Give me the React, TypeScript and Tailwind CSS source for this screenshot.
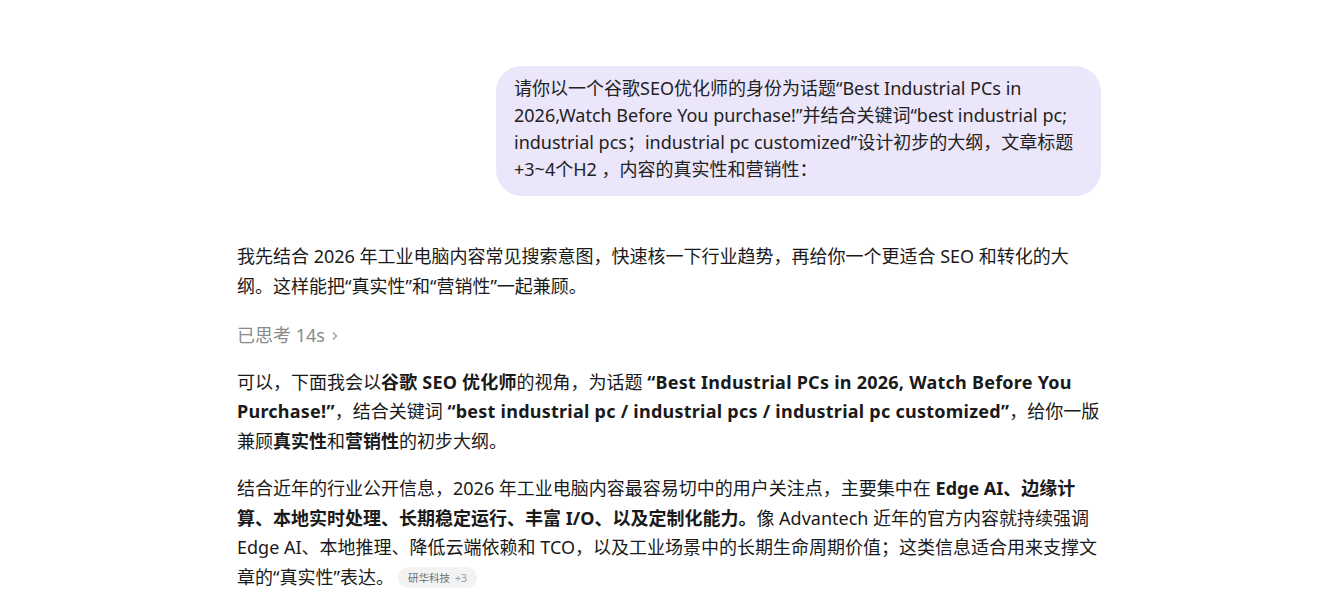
import React from "react";

const font = { fontFamily: '"Noto Sans", "Noto Sans CJK SC", sans-serif' };

export default function App() {
  return (
    <div className="min-h-[594px] w-full bg-white text-[#1a1a1a]" style={font}>
      <div className="w-[864px] ml-[237px] pt-[66px]">
        <div className="flex justify-end">
          <div className="w-[605px] rounded-[26px] bg-[#ebe6fa] pl-[18px] pr-[8px] pt-[9px] pb-[13px] text-[18px] leading-[27px] text-[#222] tracking-[0px] whitespace-nowrap">
            <div>请你以一个谷歌SEO优化师的身份为话题“Best Industrial PCs in</div>
            <div>2026,Watch Before You purchase!”并结合关键词“best industrial pc;</div>
            <div>industrial pcs；industrial pc customized”设计初步的大纲，文章标题</div>
            <div>+3~4个H2 ，内容的真实性和营销性：</div>
          </div>
        </div>

        <div className="mt-[46px] text-[18px] leading-[29.5px]">
          <p>
            我先结合 2026 年工业电脑内容常见搜索意图，快速核一下行业趋势，再给你一个更适合 SEO 和转化的大纲。这样能把“真实性”和“营销性”一起兼顾。
          </p>
          <div className="mt-[20px] flex items-center gap-[6px] text-[18px] text-[#8a8a8a]">
            <span>已思考 14s</span>
            <svg width="8" height="10" viewBox="0 0 8 10" fill="none" stroke="#9a9a9a" strokeWidth="1.3">
              <path d="M2 1.5 L5.5 5 L2 8.5" />
            </svg>
          </div>
          <p className="mt-[17px]">
            可以，下面我会以<b className="tracking-[0.2px]">谷歌 SEO 优化师</b>的视角，为话题 <b className="tracking-[0.25px]">“Best Industrial PCs in 2026, Watch Before You Purchase!”</b>，结合关键词 <b className="tracking-[0.25px]">“best industrial pc / industrial pcs / industrial pc customized”</b>，给你一版兼顾<b>真实性</b>和<b>营销性</b>的初步大纲。
          </p>
          <p className="mt-[18px]">
            结合近年的行业公开信息，2026 年工业电脑内容最容易切中的用户关注点，主要集中在 <b>Edge AI、边缘计算、本地实时处理、长期稳定运行、丰富 I/O、以及定制化能力。</b>像 Advantech 近年的官方内容就持续强调 Edge AI、本地推理、降低云端依赖和 TCO，以及工业场景中的长期生命周期价值；这类信息适合用来支撑文章的“真实性”表达。
            <span className="ml-[4px] inline-flex h-[21px] items-center rounded-full bg-[#f3f3f3] px-[10px] align-[2px] text-[10.5px] leading-none text-[#6f6f6f]">
              研华科技<span className="ml-[5px] text-[#9a9a9a]">+3</span>
            </span>
          </p>
        </div>
      </div>
    </div>
  );
}
